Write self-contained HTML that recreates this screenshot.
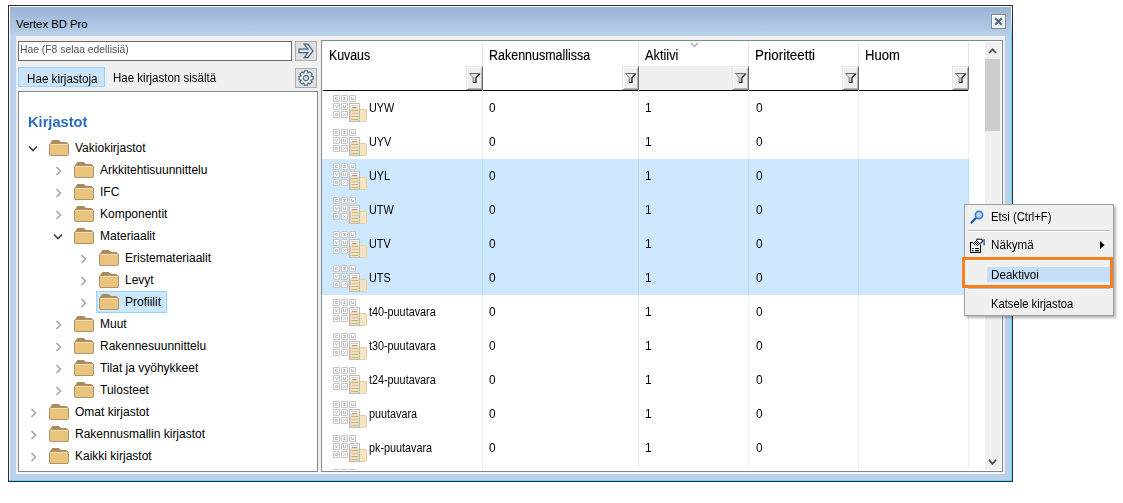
<!DOCTYPE html>
<html><head><meta charset="utf-8"><title>Vertex BD Pro</title><style>html,body{margin:0;padding:0;}
body{width:1123px;height:503px;position:relative;overflow:hidden;background:#fff;font-family:"Liberation Sans", sans-serif;}
.t{position:absolute;white-space:nowrap;transform-origin:0 0;line-height:0;height:0;}
.t span{display:inline-block;vertical-align:baseline;line-height:normal;}
svg{display:block;}
</style></head>
<body>
<div style="position:absolute;left:8px;top:5px;width:1003px;height:475px;border:1px solid #2b2b2b;background:linear-gradient(#98b2d2 0px,#b9d1ea 30px,#b9d1ea 100%);"></div>
<div style="position:absolute;left:9px;top:6px;width:1002px;height:1px;background:#fff;"></div>
<div style="position:absolute;left:9px;top:6px;width:1px;height:474px;background:#f4f8fc;"></div>
<div style="position:absolute;left:1011px;top:6px;width:1px;height:475px;background:linear-gradient(#ffffff 5px,#5fd6fb 30px,#5fd6fb);"></div>
<div style="position:absolute;left:9px;top:480px;width:1003px;height:1px;background:#5fd6fb;"></div>
<div class="t" style="left:16px;top:18.29px;font-size:11.3px;color:#000;font-weight:normal;transform:scaleX(1.0);"><span>Vertex BD Pro</span></div>
<div style="position:absolute;left:991px;top:14px;width:13px;height:13px;border:1px solid #7d8793;background:#e9f0f8;box-shadow:inset 0 0 0 1px #fff;"></div>
<svg style="position:absolute;left:994px;top:17px" width="9" height="9" viewBox="0 0 9 9"><path d="M1.2 1.2 L7.8 7.8 M7.8 1.2 L1.2 7.8" stroke="#5b6774" stroke-width="2.1"/></svg>
<div style="position:absolute;left:16px;top:36px;width:989px;height:438px;background:#f0f0f0;"></div>
<div style="position:absolute;left:16px;top:472px;width:989px;height:2px;background:#f6f6f6;"></div>
<div style="position:absolute;left:18px;top:41px;width:272px;height:18px;border:1px solid #6a6a6a;background:#fff;"></div>
<div class="t" style="left:20px;top:43.47px;font-size:11px;color:#50505a;font-weight:normal;transform:scaleX(0.94);"><span>Hae (F8 selaa edellisiä)</span></div>
<div style="position:absolute;left:295px;top:41px;width:20px;height:18px;border:1px solid #adadad;background:#e1e1e1;"></div>
<svg style="position:absolute;left:296px;top:42px" width="20" height="18" viewBox="0 0 20 18"><path d="M3,7 H11.9 L8.2,2.1 H11.8 L17,8.9 L11.8,15.7 H8.2 L11.9,10.7 H3 Z" fill="#dcebf7" stroke="#4a6074" stroke-width="1.25" stroke-linejoin="miter"/></svg>
<div style="position:absolute;left:18px;top:67px;width:85px;height:18px;border:1px solid #99d1ff;background:#cce4f7;"></div>
<div class="t" style="left:27px;top:71.65px;font-size:12px;color:#000;font-weight:normal;transform:scaleX(0.97);"><span>Hae kirjastoja</span></div>
<div class="t" style="left:113px;top:70.95px;font-size:12px;color:#000;font-weight:normal;transform:scaleX(0.96);"><span>Hae kirjaston sisältä</span></div>
<div style="position:absolute;left:295px;top:68px;width:20px;height:18px;border:1px solid #adadad;background:#e1e1e1;"></div>
<svg style="position:absolute;left:297px;top:70px" width="18" height="16" viewBox="0 0 18 16"><g transform="translate(9,8)"><polygon points="7.03,-1.57 7.03,1.57 4.90,2.01 4.89,2.04 6.08,3.86 3.86,6.08 2.04,4.89 2.01,4.90 1.57,7.03 -1.57,7.03 -2.01,4.90 -2.04,4.89 -3.86,6.08 -6.08,3.86 -4.89,2.04 -4.90,2.01 -7.03,1.57 -7.03,-1.57 -4.90,-2.01 -4.89,-2.04 -6.08,-3.86 -3.86,-6.08 -2.04,-4.89 -2.01,-4.90 -1.57,-7.03 1.57,-7.03 2.01,-4.90 2.04,-4.89 3.86,-6.08 6.08,-3.86 4.89,-2.04 4.90,-2.01" fill="#f2f6fa" stroke="#4f6a80" stroke-width="1.2"/><circle r="2.6" fill="#e1e1e1" stroke="#4f6a80" stroke-width="1.3"/></g></svg>
<div style="position:absolute;left:18px;top:91px;width:298px;height:379px;border:1px solid #828790;background:#fff;"></div>
<div class="t" style="left:27.8px;top:114.37px;font-size:14.8px;color:#2c6ebd;font-weight:bold;transform:scaleX(0.99);-webkit-text-stroke:0;"><span>Kirjastot</span></div>
<div style="position:absolute;left:28px;top:145px"><svg width="10" height="8" viewBox="0 0 10 8"><path d="M1 1.5 L5 5.5 L9 1.5" fill="none" stroke="#404040" stroke-width="1.6"/></svg></div>
<div style="position:absolute;left:49px;top:139px"><svg width="20" height="17" viewBox="0 0 20 17"><path d="M1.5 4.5 L3.5 1.5 H10 L12 3.5 H17.5 L18.5 4.5 Z" fill="#a98a5f" stroke="#a98a5f" stroke-width="1"/><rect x="0.5" y="4.5" width="19" height="12" rx="1.5" fill="#e8c47e" stroke="#b39066" stroke-width="1"/><line x1="1.5" y1="5.5" x2="18.5" y2="5.5" stroke="#f5dca8" stroke-width="1"/></svg></div>
<div class="t" style="left:75px;top:141.15px;font-size:12px;color:#000;font-weight:normal;transform:scaleX(1.0);"><span>Vakiokirjastot</span></div>
<div style="position:absolute;left:55px;top:166px"><svg width="8" height="10" viewBox="0 0 8 10"><path d="M1.5 1 L5.5 5 L1.5 9" fill="none" stroke="#a6a6a6" stroke-width="1.6"/></svg></div>
<div style="position:absolute;left:74px;top:161px"><svg width="20" height="17" viewBox="0 0 20 17"><path d="M1.5 4.5 L3.5 1.5 H10 L12 3.5 H17.5 L18.5 4.5 Z" fill="#a98a5f" stroke="#a98a5f" stroke-width="1"/><rect x="0.5" y="4.5" width="19" height="12" rx="1.5" fill="#e8c47e" stroke="#b39066" stroke-width="1"/><line x1="1.5" y1="5.5" x2="18.5" y2="5.5" stroke="#f5dca8" stroke-width="1"/></svg></div>
<div class="t" style="left:100px;top:163.15px;font-size:12px;color:#000;font-weight:normal;transform:scaleX(1.0);"><span>Arkkitehtisuunnittelu</span></div>
<div style="position:absolute;left:55px;top:188px"><svg width="8" height="10" viewBox="0 0 8 10"><path d="M1.5 1 L5.5 5 L1.5 9" fill="none" stroke="#a6a6a6" stroke-width="1.6"/></svg></div>
<div style="position:absolute;left:74px;top:183px"><svg width="20" height="17" viewBox="0 0 20 17"><path d="M1.5 4.5 L3.5 1.5 H10 L12 3.5 H17.5 L18.5 4.5 Z" fill="#a98a5f" stroke="#a98a5f" stroke-width="1"/><rect x="0.5" y="4.5" width="19" height="12" rx="1.5" fill="#e8c47e" stroke="#b39066" stroke-width="1"/><line x1="1.5" y1="5.5" x2="18.5" y2="5.5" stroke="#f5dca8" stroke-width="1"/></svg></div>
<div class="t" style="left:100px;top:185.15px;font-size:12px;color:#000;font-weight:normal;transform:scaleX(1.0);"><span>IFC</span></div>
<div style="position:absolute;left:55px;top:210px"><svg width="8" height="10" viewBox="0 0 8 10"><path d="M1.5 1 L5.5 5 L1.5 9" fill="none" stroke="#a6a6a6" stroke-width="1.6"/></svg></div>
<div style="position:absolute;left:74px;top:205px"><svg width="20" height="17" viewBox="0 0 20 17"><path d="M1.5 4.5 L3.5 1.5 H10 L12 3.5 H17.5 L18.5 4.5 Z" fill="#a98a5f" stroke="#a98a5f" stroke-width="1"/><rect x="0.5" y="4.5" width="19" height="12" rx="1.5" fill="#e8c47e" stroke="#b39066" stroke-width="1"/><line x1="1.5" y1="5.5" x2="18.5" y2="5.5" stroke="#f5dca8" stroke-width="1"/></svg></div>
<div class="t" style="left:100px;top:207.15px;font-size:12px;color:#000;font-weight:normal;transform:scaleX(1.0);"><span>Komponentit</span></div>
<div style="position:absolute;left:53px;top:233px"><svg width="10" height="8" viewBox="0 0 10 8"><path d="M1 1.5 L5 5.5 L9 1.5" fill="none" stroke="#404040" stroke-width="1.6"/></svg></div>
<div style="position:absolute;left:74px;top:227px"><svg width="20" height="17" viewBox="0 0 20 17"><path d="M1.5 4.5 L3.5 1.5 H10 L12 3.5 H17.5 L18.5 4.5 Z" fill="#a98a5f" stroke="#a98a5f" stroke-width="1"/><rect x="0.5" y="4.5" width="19" height="12" rx="1.5" fill="#e8c47e" stroke="#b39066" stroke-width="1"/><line x1="1.5" y1="5.5" x2="18.5" y2="5.5" stroke="#f5dca8" stroke-width="1"/></svg></div>
<div class="t" style="left:100px;top:229.15px;font-size:12px;color:#000;font-weight:normal;transform:scaleX(1.0);"><span>Materiaalit</span></div>
<div style="position:absolute;left:80px;top:254px"><svg width="8" height="10" viewBox="0 0 8 10"><path d="M1.5 1 L5.5 5 L1.5 9" fill="none" stroke="#a6a6a6" stroke-width="1.6"/></svg></div>
<div style="position:absolute;left:99px;top:249px"><svg width="20" height="17" viewBox="0 0 20 17"><path d="M1.5 4.5 L3.5 1.5 H10 L12 3.5 H17.5 L18.5 4.5 Z" fill="#a98a5f" stroke="#a98a5f" stroke-width="1"/><rect x="0.5" y="4.5" width="19" height="12" rx="1.5" fill="#e8c47e" stroke="#b39066" stroke-width="1"/><line x1="1.5" y1="5.5" x2="18.5" y2="5.5" stroke="#f5dca8" stroke-width="1"/></svg></div>
<div class="t" style="left:125px;top:251.15px;font-size:12px;color:#000;font-weight:normal;transform:scaleX(1.0);"><span>Eristemateriaalit</span></div>
<div style="position:absolute;left:80px;top:276px"><svg width="8" height="10" viewBox="0 0 8 10"><path d="M1.5 1 L5.5 5 L1.5 9" fill="none" stroke="#a6a6a6" stroke-width="1.6"/></svg></div>
<div style="position:absolute;left:99px;top:271px"><svg width="20" height="17" viewBox="0 0 20 17"><path d="M1.5 4.5 L3.5 1.5 H10 L12 3.5 H17.5 L18.5 4.5 Z" fill="#a98a5f" stroke="#a98a5f" stroke-width="1"/><rect x="0.5" y="4.5" width="19" height="12" rx="1.5" fill="#e8c47e" stroke="#b39066" stroke-width="1"/><line x1="1.5" y1="5.5" x2="18.5" y2="5.5" stroke="#f5dca8" stroke-width="1"/></svg></div>
<div class="t" style="left:125px;top:273.15px;font-size:12px;color:#000;font-weight:normal;transform:scaleX(1.0);"><span>Levyt</span></div>
<div style="position:absolute;left:96px;top:291px;width:69px;height:20px;border:1px solid #99d1ff;background:#cce8ff;"></div>
<div style="position:absolute;left:80px;top:298px"><svg width="8" height="10" viewBox="0 0 8 10"><path d="M1.5 1 L5.5 5 L1.5 9" fill="none" stroke="#a6a6a6" stroke-width="1.6"/></svg></div>
<div style="position:absolute;left:99px;top:293px"><svg width="20" height="17" viewBox="0 0 20 17"><path d="M1.5 4.5 L3.5 1.5 H10 L12 3.5 H17.5 L18.5 4.5 Z" fill="#a98a5f" stroke="#a98a5f" stroke-width="1"/><rect x="0.5" y="4.5" width="19" height="12" rx="1.5" fill="#e8c47e" stroke="#b39066" stroke-width="1"/><line x1="1.5" y1="5.5" x2="18.5" y2="5.5" stroke="#f5dca8" stroke-width="1"/></svg></div>
<div class="t" style="left:125px;top:295.15px;font-size:12px;color:#000;font-weight:normal;transform:scaleX(1.0);"><span>Profiilit</span></div>
<div style="position:absolute;left:55px;top:320px"><svg width="8" height="10" viewBox="0 0 8 10"><path d="M1.5 1 L5.5 5 L1.5 9" fill="none" stroke="#a6a6a6" stroke-width="1.6"/></svg></div>
<div style="position:absolute;left:74px;top:315px"><svg width="20" height="17" viewBox="0 0 20 17"><path d="M1.5 4.5 L3.5 1.5 H10 L12 3.5 H17.5 L18.5 4.5 Z" fill="#a98a5f" stroke="#a98a5f" stroke-width="1"/><rect x="0.5" y="4.5" width="19" height="12" rx="1.5" fill="#e8c47e" stroke="#b39066" stroke-width="1"/><line x1="1.5" y1="5.5" x2="18.5" y2="5.5" stroke="#f5dca8" stroke-width="1"/></svg></div>
<div class="t" style="left:100px;top:317.15px;font-size:12px;color:#000;font-weight:normal;transform:scaleX(1.0);"><span>Muut</span></div>
<div style="position:absolute;left:55px;top:342px"><svg width="8" height="10" viewBox="0 0 8 10"><path d="M1.5 1 L5.5 5 L1.5 9" fill="none" stroke="#a6a6a6" stroke-width="1.6"/></svg></div>
<div style="position:absolute;left:74px;top:337px"><svg width="20" height="17" viewBox="0 0 20 17"><path d="M1.5 4.5 L3.5 1.5 H10 L12 3.5 H17.5 L18.5 4.5 Z" fill="#a98a5f" stroke="#a98a5f" stroke-width="1"/><rect x="0.5" y="4.5" width="19" height="12" rx="1.5" fill="#e8c47e" stroke="#b39066" stroke-width="1"/><line x1="1.5" y1="5.5" x2="18.5" y2="5.5" stroke="#f5dca8" stroke-width="1"/></svg></div>
<div class="t" style="left:100px;top:339.15px;font-size:12px;color:#000;font-weight:normal;transform:scaleX(1.0);"><span>Rakennesuunnittelu</span></div>
<div style="position:absolute;left:55px;top:364px"><svg width="8" height="10" viewBox="0 0 8 10"><path d="M1.5 1 L5.5 5 L1.5 9" fill="none" stroke="#a6a6a6" stroke-width="1.6"/></svg></div>
<div style="position:absolute;left:74px;top:359px"><svg width="20" height="17" viewBox="0 0 20 17"><path d="M1.5 4.5 L3.5 1.5 H10 L12 3.5 H17.5 L18.5 4.5 Z" fill="#a98a5f" stroke="#a98a5f" stroke-width="1"/><rect x="0.5" y="4.5" width="19" height="12" rx="1.5" fill="#e8c47e" stroke="#b39066" stroke-width="1"/><line x1="1.5" y1="5.5" x2="18.5" y2="5.5" stroke="#f5dca8" stroke-width="1"/></svg></div>
<div class="t" style="left:100px;top:361.15px;font-size:12px;color:#000;font-weight:normal;transform:scaleX(1.0);"><span>Tilat ja vyöhykkeet</span></div>
<div style="position:absolute;left:55px;top:386px"><svg width="8" height="10" viewBox="0 0 8 10"><path d="M1.5 1 L5.5 5 L1.5 9" fill="none" stroke="#a6a6a6" stroke-width="1.6"/></svg></div>
<div style="position:absolute;left:74px;top:381px"><svg width="20" height="17" viewBox="0 0 20 17"><path d="M1.5 4.5 L3.5 1.5 H10 L12 3.5 H17.5 L18.5 4.5 Z" fill="#a98a5f" stroke="#a98a5f" stroke-width="1"/><rect x="0.5" y="4.5" width="19" height="12" rx="1.5" fill="#e8c47e" stroke="#b39066" stroke-width="1"/><line x1="1.5" y1="5.5" x2="18.5" y2="5.5" stroke="#f5dca8" stroke-width="1"/></svg></div>
<div class="t" style="left:100px;top:383.15px;font-size:12px;color:#000;font-weight:normal;transform:scaleX(1.0);"><span>Tulosteet</span></div>
<div style="position:absolute;left:30px;top:408px"><svg width="8" height="10" viewBox="0 0 8 10"><path d="M1.5 1 L5.5 5 L1.5 9" fill="none" stroke="#a6a6a6" stroke-width="1.6"/></svg></div>
<div style="position:absolute;left:49px;top:403px"><svg width="20" height="17" viewBox="0 0 20 17"><path d="M1.5 4.5 L3.5 1.5 H10 L12 3.5 H17.5 L18.5 4.5 Z" fill="#a98a5f" stroke="#a98a5f" stroke-width="1"/><rect x="0.5" y="4.5" width="19" height="12" rx="1.5" fill="#e8c47e" stroke="#b39066" stroke-width="1"/><line x1="1.5" y1="5.5" x2="18.5" y2="5.5" stroke="#f5dca8" stroke-width="1"/></svg></div>
<div class="t" style="left:75px;top:405.15px;font-size:12px;color:#000;font-weight:normal;transform:scaleX(1.0);"><span>Omat kirjastot</span></div>
<div style="position:absolute;left:30px;top:430px"><svg width="8" height="10" viewBox="0 0 8 10"><path d="M1.5 1 L5.5 5 L1.5 9" fill="none" stroke="#a6a6a6" stroke-width="1.6"/></svg></div>
<div style="position:absolute;left:49px;top:425px"><svg width="20" height="17" viewBox="0 0 20 17"><path d="M1.5 4.5 L3.5 1.5 H10 L12 3.5 H17.5 L18.5 4.5 Z" fill="#a98a5f" stroke="#a98a5f" stroke-width="1"/><rect x="0.5" y="4.5" width="19" height="12" rx="1.5" fill="#e8c47e" stroke="#b39066" stroke-width="1"/><line x1="1.5" y1="5.5" x2="18.5" y2="5.5" stroke="#f5dca8" stroke-width="1"/></svg></div>
<div class="t" style="left:75px;top:427.15px;font-size:12px;color:#000;font-weight:normal;transform:scaleX(1.0);"><span>Rakennusmallin kirjastot</span></div>
<div style="position:absolute;left:30px;top:452px"><svg width="8" height="10" viewBox="0 0 8 10"><path d="M1.5 1 L5.5 5 L1.5 9" fill="none" stroke="#a6a6a6" stroke-width="1.6"/></svg></div>
<div style="position:absolute;left:49px;top:447px"><svg width="20" height="17" viewBox="0 0 20 17"><path d="M1.5 4.5 L3.5 1.5 H10 L12 3.5 H17.5 L18.5 4.5 Z" fill="#a98a5f" stroke="#a98a5f" stroke-width="1"/><rect x="0.5" y="4.5" width="19" height="12" rx="1.5" fill="#e8c47e" stroke="#b39066" stroke-width="1"/><line x1="1.5" y1="5.5" x2="18.5" y2="5.5" stroke="#f5dca8" stroke-width="1"/></svg></div>
<div class="t" style="left:75px;top:449.15px;font-size:12px;color:#000;font-weight:normal;transform:scaleX(1.0);"><span>Kaikki kirjastot</span></div>
<div style="position:absolute;left:321px;top:40px;width:680px;height:430px;border:1px solid #828790;background:#fff;"></div>
<div style="position:absolute;left:482px;top:42px;width:1px;height:24px;background:#e5e5e5;"></div>
<div style="position:absolute;left:638px;top:42px;width:1px;height:24px;background:#e5e5e5;"></div>
<div style="position:absolute;left:748px;top:42px;width:1px;height:24px;background:#e5e5e5;"></div>
<div style="position:absolute;left:858px;top:42px;width:1px;height:24px;background:#e5e5e5;"></div>
<div style="position:absolute;left:968px;top:42px;width:1px;height:24px;background:#e5e5e5;"></div>
<div style="position:absolute;left:322px;top:159px;width:647px;height:136px;background:#cde8ff;"></div>
<div style="position:absolute;left:482px;top:91px;width:1px;height:379px;background:#e8f1fb;"></div>
<div style="position:absolute;left:482px;top:159px;width:1px;height:136px;background:#b9dcfa;"></div>
<div style="position:absolute;left:323px;top:90px;width:159px;height:1px;background:#0a0a0a;"></div>
<div style="position:absolute;left:466px;top:66px;width:15px;height:23px;background:#efefef;border-left:1px solid #e3e3e3;border-top:1px solid #e3e3e3;box-shadow:inset 1px 1px 0 #fff;border-right:1px solid #6e6e6e;border-bottom:1px solid #8f8f8f;box-sizing:border-box;width:17px;height:24px;box-shadow:inset 1px 1px 0 #fff, inset -1px -1px 0 #b4b4b4;"></div>
<div style="position:absolute;left:469px;top:73px"><svg width="12" height="11" viewBox="0 0 12 11"><path d="M0.5 0.5 H11 L7 4.8 V9.5 H4 V4.8 Z" fill="#c2c2c2"/><path d="M1.8 1.2 H9.5 L6.5 4.2 H4.5 Z" fill="#e6e6e6"/><path d="M0.5 0.5 L4 4.5 V9.5" fill="none" stroke="#8c8c8c" stroke-width="1"/><path d="M0.5 0.5 H10" fill="none" stroke="#6a6a6a" stroke-width="1"/><path d="M11 0.5 L7 4.8 V9.5 H4" fill="none" stroke="#0d0d0d" stroke-width="1.1" stroke-linejoin="miter"/></svg></div>
<div class="t" style="left:328.5px;top:46.02px;font-size:15.5px;color:#000;font-weight:normal;transform:scaleX(0.795);-webkit-text-stroke:0.15px #000;"><span>Kuvaus</span></div>
<div style="position:absolute;left:638px;top:91px;width:1px;height:379px;background:#e8f1fb;"></div>
<div style="position:absolute;left:638px;top:159px;width:1px;height:136px;background:#b9dcfa;"></div>
<div style="position:absolute;left:483px;top:90px;width:155px;height:1px;background:#0a0a0a;"></div>
<div style="position:absolute;left:622px;top:66px;width:15px;height:23px;background:#efefef;border-left:1px solid #e3e3e3;border-top:1px solid #e3e3e3;box-shadow:inset 1px 1px 0 #fff;border-right:1px solid #6e6e6e;border-bottom:1px solid #8f8f8f;box-sizing:border-box;width:17px;height:24px;box-shadow:inset 1px 1px 0 #fff, inset -1px -1px 0 #b4b4b4;"></div>
<div style="position:absolute;left:625px;top:73px"><svg width="12" height="11" viewBox="0 0 12 11"><path d="M0.5 0.5 H11 L7 4.8 V9.5 H4 V4.8 Z" fill="#c2c2c2"/><path d="M1.8 1.2 H9.5 L6.5 4.2 H4.5 Z" fill="#e6e6e6"/><path d="M0.5 0.5 L4 4.5 V9.5" fill="none" stroke="#8c8c8c" stroke-width="1"/><path d="M0.5 0.5 H10" fill="none" stroke="#6a6a6a" stroke-width="1"/><path d="M11 0.5 L7 4.8 V9.5 H4" fill="none" stroke="#0d0d0d" stroke-width="1.1" stroke-linejoin="miter"/></svg></div>
<div class="t" style="left:489px;top:46.02px;font-size:15.5px;color:#000;font-weight:normal;transform:scaleX(0.805);-webkit-text-stroke:0.15px #000;"><span>Rakennusmallissa</span></div>
<div style="position:absolute;left:748px;top:91px;width:1px;height:379px;background:#e8f1fb;"></div>
<div style="position:absolute;left:748px;top:159px;width:1px;height:136px;background:#b9dcfa;"></div>
<div style="position:absolute;left:639px;top:66px;width:93px;height:24px;background:#f0f0f0;"></div>
<div style="position:absolute;left:639px;top:90px;width:109px;height:1px;background:#0a0a0a;"></div>
<div style="position:absolute;left:732px;top:66px;width:15px;height:23px;background:#efefef;border-left:1px solid #e3e3e3;border-top:1px solid #e3e3e3;box-shadow:inset 1px 1px 0 #fff;border-right:1px solid #6e6e6e;border-bottom:1px solid #8f8f8f;box-sizing:border-box;width:17px;height:24px;box-shadow:inset 1px 1px 0 #fff, inset -1px -1px 0 #b4b4b4;"></div>
<div style="position:absolute;left:735px;top:73px"><svg width="12" height="11" viewBox="0 0 12 11"><path d="M0.5 0.5 H11 L7 4.8 V9.5 H4 V4.8 Z" fill="#c2c2c2"/><path d="M1.8 1.2 H9.5 L6.5 4.2 H4.5 Z" fill="#e6e6e6"/><path d="M0.5 0.5 L4 4.5 V9.5" fill="none" stroke="#8c8c8c" stroke-width="1"/><path d="M0.5 0.5 H10" fill="none" stroke="#6a6a6a" stroke-width="1"/><path d="M11 0.5 L7 4.8 V9.5 H4" fill="none" stroke="#0d0d0d" stroke-width="1.1" stroke-linejoin="miter"/></svg></div>
<div class="t" style="left:645px;top:46.02px;font-size:15.5px;color:#000;font-weight:normal;transform:scaleX(0.825);-webkit-text-stroke:0.15px #000;"><span>Aktiivi</span></div>
<div style="position:absolute;left:858px;top:91px;width:1px;height:379px;background:#e8f1fb;"></div>
<div style="position:absolute;left:858px;top:159px;width:1px;height:136px;background:#b9dcfa;"></div>
<div style="position:absolute;left:749px;top:90px;width:109px;height:1px;background:#0a0a0a;"></div>
<div style="position:absolute;left:842px;top:66px;width:15px;height:23px;background:#efefef;border-left:1px solid #e3e3e3;border-top:1px solid #e3e3e3;box-shadow:inset 1px 1px 0 #fff;border-right:1px solid #6e6e6e;border-bottom:1px solid #8f8f8f;box-sizing:border-box;width:17px;height:24px;box-shadow:inset 1px 1px 0 #fff, inset -1px -1px 0 #b4b4b4;"></div>
<div style="position:absolute;left:845px;top:73px"><svg width="12" height="11" viewBox="0 0 12 11"><path d="M0.5 0.5 H11 L7 4.8 V9.5 H4 V4.8 Z" fill="#c2c2c2"/><path d="M1.8 1.2 H9.5 L6.5 4.2 H4.5 Z" fill="#e6e6e6"/><path d="M0.5 0.5 L4 4.5 V9.5" fill="none" stroke="#8c8c8c" stroke-width="1"/><path d="M0.5 0.5 H10" fill="none" stroke="#6a6a6a" stroke-width="1"/><path d="M11 0.5 L7 4.8 V9.5 H4" fill="none" stroke="#0d0d0d" stroke-width="1.1" stroke-linejoin="miter"/></svg></div>
<div class="t" style="left:755px;top:46.02px;font-size:15.5px;color:#000;font-weight:normal;transform:scaleX(0.861);-webkit-text-stroke:0.15px #000;"><span>Prioriteetti</span></div>
<div style="position:absolute;left:968px;top:91px;width:1px;height:379px;background:#e8f1fb;"></div>
<div style="position:absolute;left:968px;top:159px;width:1px;height:136px;background:#b9dcfa;"></div>
<div style="position:absolute;left:859px;top:90px;width:109px;height:1px;background:#0a0a0a;"></div>
<div style="position:absolute;left:952px;top:66px;width:15px;height:23px;background:#efefef;border-left:1px solid #e3e3e3;border-top:1px solid #e3e3e3;box-shadow:inset 1px 1px 0 #fff;border-right:1px solid #6e6e6e;border-bottom:1px solid #8f8f8f;box-sizing:border-box;width:17px;height:24px;box-shadow:inset 1px 1px 0 #fff, inset -1px -1px 0 #b4b4b4;"></div>
<div style="position:absolute;left:955px;top:73px"><svg width="12" height="11" viewBox="0 0 12 11"><path d="M0.5 0.5 H11 L7 4.8 V9.5 H4 V4.8 Z" fill="#c2c2c2"/><path d="M1.8 1.2 H9.5 L6.5 4.2 H4.5 Z" fill="#e6e6e6"/><path d="M0.5 0.5 L4 4.5 V9.5" fill="none" stroke="#8c8c8c" stroke-width="1"/><path d="M0.5 0.5 H10" fill="none" stroke="#6a6a6a" stroke-width="1"/><path d="M11 0.5 L7 4.8 V9.5 H4" fill="none" stroke="#0d0d0d" stroke-width="1.1" stroke-linejoin="miter"/></svg></div>
<div class="t" style="left:865px;top:46.02px;font-size:15.5px;color:#000;font-weight:normal;transform:scaleX(0.841);-webkit-text-stroke:0.15px #000;"><span>Huom</span></div>
<svg style="position:absolute;left:690px;top:42px" width="9" height="6" viewBox="0 0 9 6"><path d="M0.8 0.8 L4.5 4.5 L8.2 0.8" fill="none" stroke="#9a9a9a" stroke-width="1.1"/></svg>
<div style="position:absolute;left:333px;top:95px;height:28px;overflow:hidden"><svg width="36" height="28" viewBox="0 0 36 28"><rect x="0.5" y="0.5" width="6" height="6" rx="0.8" fill="#fff" stroke="#c6c6c6" stroke-width="1.1"/><path transform="translate(0,0)" d="M5 2.5 H2.5 V4.5 H5" fill="none" stroke="#b4b4b4" stroke-width="0.9"/><rect x="8.5" y="0.5" width="6" height="6" rx="0.8" fill="#fff" stroke="#c6c6c6" stroke-width="1.1"/><path transform="translate(8,0)" d="M2 2.5 H5 M3.5 2.5 V4.5 M2 4.5 H5" fill="none" stroke="#b4b4b4" stroke-width="0.9"/><rect x="16.5" y="0.5" width="6" height="6" rx="0.8" fill="#fff" stroke="#c6c6c6" stroke-width="1.1"/><path transform="translate(16,0)" d="M2.5 2 V4.5 H5 M3 3.5 L4 4.5 L5 2.5" fill="none" stroke="#b4b4b4" stroke-width="0.9"/><rect x="0.5" y="8.5" width="6" height="6" rx="0.8" fill="#fff" stroke="#c6c6c6" stroke-width="1.1"/><path transform="translate(0,8)" d="M2.2 2 L3.5 5 L4.8 2" fill="none" stroke="#b4b4b4" stroke-width="0.9"/><rect x="8.5" y="8.5" width="6" height="6" rx="0.8" fill="#fff" stroke="#c6c6c6" stroke-width="1.1"/><path transform="translate(8,8)" d="M2.5 2 V4.8 H4.5 V2" fill="none" stroke="#b4b4b4" stroke-width="0.9"/><rect x="0.5" y="16.5" width="6" height="6" rx="0.8" fill="#fff" stroke="#c6c6c6" stroke-width="1.1"/><path transform="translate(0,16)" d="M2.5 2.5 H4.5 V4.5 H2.5 Z" fill="none" stroke="#b4b4b4" stroke-width="0.9"/><rect x="8.5" y="16.5" width="6" height="6" rx="0.8" fill="#fff" stroke="#c6c6c6" stroke-width="1.1"/><path transform="translate(8,16)" d="M2.2 2.2 L4.8 4.8 M4.8 2.2 L2.2 4.8" fill="none" stroke="#b4b4b4" stroke-width="0.9"/><rect x="22" y="14.5" width="11.5" height="12" rx="1" fill="#f7e3c0" stroke="#e6cfa5" stroke-width="1"/><rect x="16.5" y="8.5" width="10" height="18" fill="#fff" stroke="#bdbdbd" stroke-width="1"/><rect x="17.5" y="12" width="8" height="14" fill="#efe3bf"/><line x1="18" y1="10.5" x2="25" y2="10.5" stroke="#c9c9c9"/><line x1="19" y1="12.5" x2="24" y2="12.5" stroke="#c09080" stroke-width="1.2"/><line x1="18.5" y1="15.5" x2="25" y2="15.5" stroke="#c8b46a"/><line x1="18.5" y1="18.5" x2="25" y2="18.5" stroke="#e6c0b0" stroke-width="1.5"/><line x1="18.5" y1="21.5" x2="25" y2="21.5" stroke="#c8b46a"/><line x1="18.5" y1="24.5" x2="25" y2="24.5" stroke="#c8b46a"/><line x1="17" y1="14" x2="17" y2="26" stroke="#d4a0a0"/><line x1="26" y1="14" x2="26" y2="26" stroke="#a8ccb8"/></svg></div>
<div class="t" style="left:368.5px;top:100.95px;font-size:12px;color:#000;font-weight:normal;transform:scaleX(0.9);"><span>UYW</span></div>
<div class="t" style="left:488.6px;top:101.09px;font-size:12.5px;color:#000;font-weight:normal;transform:scaleX(0.95);"><span>0</span></div>
<div class="t" style="left:645px;top:101.09px;font-size:12.5px;color:#000;font-weight:normal;transform:scaleX(0.95);"><span>1</span></div>
<div class="t" style="left:755.6px;top:101.09px;font-size:12.5px;color:#000;font-weight:normal;transform:scaleX(0.95);"><span>0</span></div>
<div style="position:absolute;left:333px;top:129px;height:28px;overflow:hidden"><svg width="36" height="28" viewBox="0 0 36 28"><rect x="0.5" y="0.5" width="6" height="6" rx="0.8" fill="#fff" stroke="#c6c6c6" stroke-width="1.1"/><path transform="translate(0,0)" d="M5 2.5 H2.5 V4.5 H5" fill="none" stroke="#b4b4b4" stroke-width="0.9"/><rect x="8.5" y="0.5" width="6" height="6" rx="0.8" fill="#fff" stroke="#c6c6c6" stroke-width="1.1"/><path transform="translate(8,0)" d="M2 2.5 H5 M3.5 2.5 V4.5 M2 4.5 H5" fill="none" stroke="#b4b4b4" stroke-width="0.9"/><rect x="16.5" y="0.5" width="6" height="6" rx="0.8" fill="#fff" stroke="#c6c6c6" stroke-width="1.1"/><path transform="translate(16,0)" d="M2.5 2 V4.5 H5 M3 3.5 L4 4.5 L5 2.5" fill="none" stroke="#b4b4b4" stroke-width="0.9"/><rect x="0.5" y="8.5" width="6" height="6" rx="0.8" fill="#fff" stroke="#c6c6c6" stroke-width="1.1"/><path transform="translate(0,8)" d="M2.2 2 L3.5 5 L4.8 2" fill="none" stroke="#b4b4b4" stroke-width="0.9"/><rect x="8.5" y="8.5" width="6" height="6" rx="0.8" fill="#fff" stroke="#c6c6c6" stroke-width="1.1"/><path transform="translate(8,8)" d="M2.5 2 V4.8 H4.5 V2" fill="none" stroke="#b4b4b4" stroke-width="0.9"/><rect x="0.5" y="16.5" width="6" height="6" rx="0.8" fill="#fff" stroke="#c6c6c6" stroke-width="1.1"/><path transform="translate(0,16)" d="M2.5 2.5 H4.5 V4.5 H2.5 Z" fill="none" stroke="#b4b4b4" stroke-width="0.9"/><rect x="8.5" y="16.5" width="6" height="6" rx="0.8" fill="#fff" stroke="#c6c6c6" stroke-width="1.1"/><path transform="translate(8,16)" d="M2.2 2.2 L4.8 4.8 M4.8 2.2 L2.2 4.8" fill="none" stroke="#b4b4b4" stroke-width="0.9"/><rect x="22" y="14.5" width="11.5" height="12" rx="1" fill="#f7e3c0" stroke="#e6cfa5" stroke-width="1"/><rect x="16.5" y="8.5" width="10" height="18" fill="#fff" stroke="#bdbdbd" stroke-width="1"/><rect x="17.5" y="12" width="8" height="14" fill="#efe3bf"/><line x1="18" y1="10.5" x2="25" y2="10.5" stroke="#c9c9c9"/><line x1="19" y1="12.5" x2="24" y2="12.5" stroke="#c09080" stroke-width="1.2"/><line x1="18.5" y1="15.5" x2="25" y2="15.5" stroke="#c8b46a"/><line x1="18.5" y1="18.5" x2="25" y2="18.5" stroke="#e6c0b0" stroke-width="1.5"/><line x1="18.5" y1="21.5" x2="25" y2="21.5" stroke="#c8b46a"/><line x1="18.5" y1="24.5" x2="25" y2="24.5" stroke="#c8b46a"/><line x1="17" y1="14" x2="17" y2="26" stroke="#d4a0a0"/><line x1="26" y1="14" x2="26" y2="26" stroke="#a8ccb8"/></svg></div>
<div class="t" style="left:368.5px;top:134.95px;font-size:12px;color:#000;font-weight:normal;transform:scaleX(0.9);"><span>UYV</span></div>
<div class="t" style="left:488.6px;top:135.09px;font-size:12.5px;color:#000;font-weight:normal;transform:scaleX(0.95);"><span>0</span></div>
<div class="t" style="left:645px;top:135.09px;font-size:12.5px;color:#000;font-weight:normal;transform:scaleX(0.95);"><span>1</span></div>
<div class="t" style="left:755.6px;top:135.09px;font-size:12.5px;color:#000;font-weight:normal;transform:scaleX(0.95);"><span>0</span></div>
<div style="position:absolute;left:333px;top:163px;height:28px;overflow:hidden"><svg width="36" height="28" viewBox="0 0 36 28"><rect x="0.5" y="0.5" width="6" height="6" rx="0.8" fill="#fff" stroke="#c6c6c6" stroke-width="1.1"/><path transform="translate(0,0)" d="M5 2.5 H2.5 V4.5 H5" fill="none" stroke="#b4b4b4" stroke-width="0.9"/><rect x="8.5" y="0.5" width="6" height="6" rx="0.8" fill="#fff" stroke="#c6c6c6" stroke-width="1.1"/><path transform="translate(8,0)" d="M2 2.5 H5 M3.5 2.5 V4.5 M2 4.5 H5" fill="none" stroke="#b4b4b4" stroke-width="0.9"/><rect x="16.5" y="0.5" width="6" height="6" rx="0.8" fill="#fff" stroke="#c6c6c6" stroke-width="1.1"/><path transform="translate(16,0)" d="M2.5 2 V4.5 H5 M3 3.5 L4 4.5 L5 2.5" fill="none" stroke="#b4b4b4" stroke-width="0.9"/><rect x="0.5" y="8.5" width="6" height="6" rx="0.8" fill="#fff" stroke="#c6c6c6" stroke-width="1.1"/><path transform="translate(0,8)" d="M2.2 2 L3.5 5 L4.8 2" fill="none" stroke="#b4b4b4" stroke-width="0.9"/><rect x="8.5" y="8.5" width="6" height="6" rx="0.8" fill="#fff" stroke="#c6c6c6" stroke-width="1.1"/><path transform="translate(8,8)" d="M2.5 2 V4.8 H4.5 V2" fill="none" stroke="#b4b4b4" stroke-width="0.9"/><rect x="0.5" y="16.5" width="6" height="6" rx="0.8" fill="#fff" stroke="#c6c6c6" stroke-width="1.1"/><path transform="translate(0,16)" d="M2.5 2.5 H4.5 V4.5 H2.5 Z" fill="none" stroke="#b4b4b4" stroke-width="0.9"/><rect x="8.5" y="16.5" width="6" height="6" rx="0.8" fill="#fff" stroke="#c6c6c6" stroke-width="1.1"/><path transform="translate(8,16)" d="M2.2 2.2 L4.8 4.8 M4.8 2.2 L2.2 4.8" fill="none" stroke="#b4b4b4" stroke-width="0.9"/><rect x="22" y="14.5" width="11.5" height="12" rx="1" fill="#f7e3c0" stroke="#e6cfa5" stroke-width="1"/><rect x="16.5" y="8.5" width="10" height="18" fill="#fff" stroke="#bdbdbd" stroke-width="1"/><rect x="17.5" y="12" width="8" height="14" fill="#efe3bf"/><line x1="18" y1="10.5" x2="25" y2="10.5" stroke="#c9c9c9"/><line x1="19" y1="12.5" x2="24" y2="12.5" stroke="#c09080" stroke-width="1.2"/><line x1="18.5" y1="15.5" x2="25" y2="15.5" stroke="#c8b46a"/><line x1="18.5" y1="18.5" x2="25" y2="18.5" stroke="#e6c0b0" stroke-width="1.5"/><line x1="18.5" y1="21.5" x2="25" y2="21.5" stroke="#c8b46a"/><line x1="18.5" y1="24.5" x2="25" y2="24.5" stroke="#c8b46a"/><line x1="17" y1="14" x2="17" y2="26" stroke="#d4a0a0"/><line x1="26" y1="14" x2="26" y2="26" stroke="#a8ccb8"/></svg></div>
<div class="t" style="left:368.5px;top:168.95px;font-size:12px;color:#000;font-weight:normal;transform:scaleX(0.9);"><span>UYL</span></div>
<div class="t" style="left:488.6px;top:169.09px;font-size:12.5px;color:#000;font-weight:normal;transform:scaleX(0.95);"><span>0</span></div>
<div class="t" style="left:645px;top:169.09px;font-size:12.5px;color:#000;font-weight:normal;transform:scaleX(0.95);"><span>1</span></div>
<div class="t" style="left:755.6px;top:169.09px;font-size:12.5px;color:#000;font-weight:normal;transform:scaleX(0.95);"><span>0</span></div>
<div style="position:absolute;left:333px;top:197px;height:28px;overflow:hidden"><svg width="36" height="28" viewBox="0 0 36 28"><rect x="0.5" y="0.5" width="6" height="6" rx="0.8" fill="#fff" stroke="#c6c6c6" stroke-width="1.1"/><path transform="translate(0,0)" d="M5 2.5 H2.5 V4.5 H5" fill="none" stroke="#b4b4b4" stroke-width="0.9"/><rect x="8.5" y="0.5" width="6" height="6" rx="0.8" fill="#fff" stroke="#c6c6c6" stroke-width="1.1"/><path transform="translate(8,0)" d="M2 2.5 H5 M3.5 2.5 V4.5 M2 4.5 H5" fill="none" stroke="#b4b4b4" stroke-width="0.9"/><rect x="16.5" y="0.5" width="6" height="6" rx="0.8" fill="#fff" stroke="#c6c6c6" stroke-width="1.1"/><path transform="translate(16,0)" d="M2.5 2 V4.5 H5 M3 3.5 L4 4.5 L5 2.5" fill="none" stroke="#b4b4b4" stroke-width="0.9"/><rect x="0.5" y="8.5" width="6" height="6" rx="0.8" fill="#fff" stroke="#c6c6c6" stroke-width="1.1"/><path transform="translate(0,8)" d="M2.2 2 L3.5 5 L4.8 2" fill="none" stroke="#b4b4b4" stroke-width="0.9"/><rect x="8.5" y="8.5" width="6" height="6" rx="0.8" fill="#fff" stroke="#c6c6c6" stroke-width="1.1"/><path transform="translate(8,8)" d="M2.5 2 V4.8 H4.5 V2" fill="none" stroke="#b4b4b4" stroke-width="0.9"/><rect x="0.5" y="16.5" width="6" height="6" rx="0.8" fill="#fff" stroke="#c6c6c6" stroke-width="1.1"/><path transform="translate(0,16)" d="M2.5 2.5 H4.5 V4.5 H2.5 Z" fill="none" stroke="#b4b4b4" stroke-width="0.9"/><rect x="8.5" y="16.5" width="6" height="6" rx="0.8" fill="#fff" stroke="#c6c6c6" stroke-width="1.1"/><path transform="translate(8,16)" d="M2.2 2.2 L4.8 4.8 M4.8 2.2 L2.2 4.8" fill="none" stroke="#b4b4b4" stroke-width="0.9"/><rect x="22" y="14.5" width="11.5" height="12" rx="1" fill="#f7e3c0" stroke="#e6cfa5" stroke-width="1"/><rect x="16.5" y="8.5" width="10" height="18" fill="#fff" stroke="#bdbdbd" stroke-width="1"/><rect x="17.5" y="12" width="8" height="14" fill="#efe3bf"/><line x1="18" y1="10.5" x2="25" y2="10.5" stroke="#c9c9c9"/><line x1="19" y1="12.5" x2="24" y2="12.5" stroke="#c09080" stroke-width="1.2"/><line x1="18.5" y1="15.5" x2="25" y2="15.5" stroke="#c8b46a"/><line x1="18.5" y1="18.5" x2="25" y2="18.5" stroke="#e6c0b0" stroke-width="1.5"/><line x1="18.5" y1="21.5" x2="25" y2="21.5" stroke="#c8b46a"/><line x1="18.5" y1="24.5" x2="25" y2="24.5" stroke="#c8b46a"/><line x1="17" y1="14" x2="17" y2="26" stroke="#d4a0a0"/><line x1="26" y1="14" x2="26" y2="26" stroke="#a8ccb8"/></svg></div>
<div class="t" style="left:368.5px;top:202.95px;font-size:12px;color:#000;font-weight:normal;transform:scaleX(0.9);"><span>UTW</span></div>
<div class="t" style="left:488.6px;top:203.09px;font-size:12.5px;color:#000;font-weight:normal;transform:scaleX(0.95);"><span>0</span></div>
<div class="t" style="left:645px;top:203.09px;font-size:12.5px;color:#000;font-weight:normal;transform:scaleX(0.95);"><span>1</span></div>
<div class="t" style="left:755.6px;top:203.09px;font-size:12.5px;color:#000;font-weight:normal;transform:scaleX(0.95);"><span>0</span></div>
<div style="position:absolute;left:333px;top:231px;height:28px;overflow:hidden"><svg width="36" height="28" viewBox="0 0 36 28"><rect x="0.5" y="0.5" width="6" height="6" rx="0.8" fill="#fff" stroke="#c6c6c6" stroke-width="1.1"/><path transform="translate(0,0)" d="M5 2.5 H2.5 V4.5 H5" fill="none" stroke="#b4b4b4" stroke-width="0.9"/><rect x="8.5" y="0.5" width="6" height="6" rx="0.8" fill="#fff" stroke="#c6c6c6" stroke-width="1.1"/><path transform="translate(8,0)" d="M2 2.5 H5 M3.5 2.5 V4.5 M2 4.5 H5" fill="none" stroke="#b4b4b4" stroke-width="0.9"/><rect x="16.5" y="0.5" width="6" height="6" rx="0.8" fill="#fff" stroke="#c6c6c6" stroke-width="1.1"/><path transform="translate(16,0)" d="M2.5 2 V4.5 H5 M3 3.5 L4 4.5 L5 2.5" fill="none" stroke="#b4b4b4" stroke-width="0.9"/><rect x="0.5" y="8.5" width="6" height="6" rx="0.8" fill="#fff" stroke="#c6c6c6" stroke-width="1.1"/><path transform="translate(0,8)" d="M2.2 2 L3.5 5 L4.8 2" fill="none" stroke="#b4b4b4" stroke-width="0.9"/><rect x="8.5" y="8.5" width="6" height="6" rx="0.8" fill="#fff" stroke="#c6c6c6" stroke-width="1.1"/><path transform="translate(8,8)" d="M2.5 2 V4.8 H4.5 V2" fill="none" stroke="#b4b4b4" stroke-width="0.9"/><rect x="0.5" y="16.5" width="6" height="6" rx="0.8" fill="#fff" stroke="#c6c6c6" stroke-width="1.1"/><path transform="translate(0,16)" d="M2.5 2.5 H4.5 V4.5 H2.5 Z" fill="none" stroke="#b4b4b4" stroke-width="0.9"/><rect x="8.5" y="16.5" width="6" height="6" rx="0.8" fill="#fff" stroke="#c6c6c6" stroke-width="1.1"/><path transform="translate(8,16)" d="M2.2 2.2 L4.8 4.8 M4.8 2.2 L2.2 4.8" fill="none" stroke="#b4b4b4" stroke-width="0.9"/><rect x="22" y="14.5" width="11.5" height="12" rx="1" fill="#f7e3c0" stroke="#e6cfa5" stroke-width="1"/><rect x="16.5" y="8.5" width="10" height="18" fill="#fff" stroke="#bdbdbd" stroke-width="1"/><rect x="17.5" y="12" width="8" height="14" fill="#efe3bf"/><line x1="18" y1="10.5" x2="25" y2="10.5" stroke="#c9c9c9"/><line x1="19" y1="12.5" x2="24" y2="12.5" stroke="#c09080" stroke-width="1.2"/><line x1="18.5" y1="15.5" x2="25" y2="15.5" stroke="#c8b46a"/><line x1="18.5" y1="18.5" x2="25" y2="18.5" stroke="#e6c0b0" stroke-width="1.5"/><line x1="18.5" y1="21.5" x2="25" y2="21.5" stroke="#c8b46a"/><line x1="18.5" y1="24.5" x2="25" y2="24.5" stroke="#c8b46a"/><line x1="17" y1="14" x2="17" y2="26" stroke="#d4a0a0"/><line x1="26" y1="14" x2="26" y2="26" stroke="#a8ccb8"/></svg></div>
<div class="t" style="left:368.5px;top:236.95px;font-size:12px;color:#000;font-weight:normal;transform:scaleX(0.9);"><span>UTV</span></div>
<div class="t" style="left:488.6px;top:237.09px;font-size:12.5px;color:#000;font-weight:normal;transform:scaleX(0.95);"><span>0</span></div>
<div class="t" style="left:645px;top:237.09px;font-size:12.5px;color:#000;font-weight:normal;transform:scaleX(0.95);"><span>1</span></div>
<div class="t" style="left:755.6px;top:237.09px;font-size:12.5px;color:#000;font-weight:normal;transform:scaleX(0.95);"><span>0</span></div>
<div style="position:absolute;left:333px;top:265px;height:28px;overflow:hidden"><svg width="36" height="28" viewBox="0 0 36 28"><rect x="0.5" y="0.5" width="6" height="6" rx="0.8" fill="#fff" stroke="#c6c6c6" stroke-width="1.1"/><path transform="translate(0,0)" d="M5 2.5 H2.5 V4.5 H5" fill="none" stroke="#b4b4b4" stroke-width="0.9"/><rect x="8.5" y="0.5" width="6" height="6" rx="0.8" fill="#fff" stroke="#c6c6c6" stroke-width="1.1"/><path transform="translate(8,0)" d="M2 2.5 H5 M3.5 2.5 V4.5 M2 4.5 H5" fill="none" stroke="#b4b4b4" stroke-width="0.9"/><rect x="16.5" y="0.5" width="6" height="6" rx="0.8" fill="#fff" stroke="#c6c6c6" stroke-width="1.1"/><path transform="translate(16,0)" d="M2.5 2 V4.5 H5 M3 3.5 L4 4.5 L5 2.5" fill="none" stroke="#b4b4b4" stroke-width="0.9"/><rect x="0.5" y="8.5" width="6" height="6" rx="0.8" fill="#fff" stroke="#c6c6c6" stroke-width="1.1"/><path transform="translate(0,8)" d="M2.2 2 L3.5 5 L4.8 2" fill="none" stroke="#b4b4b4" stroke-width="0.9"/><rect x="8.5" y="8.5" width="6" height="6" rx="0.8" fill="#fff" stroke="#c6c6c6" stroke-width="1.1"/><path transform="translate(8,8)" d="M2.5 2 V4.8 H4.5 V2" fill="none" stroke="#b4b4b4" stroke-width="0.9"/><rect x="0.5" y="16.5" width="6" height="6" rx="0.8" fill="#fff" stroke="#c6c6c6" stroke-width="1.1"/><path transform="translate(0,16)" d="M2.5 2.5 H4.5 V4.5 H2.5 Z" fill="none" stroke="#b4b4b4" stroke-width="0.9"/><rect x="8.5" y="16.5" width="6" height="6" rx="0.8" fill="#fff" stroke="#c6c6c6" stroke-width="1.1"/><path transform="translate(8,16)" d="M2.2 2.2 L4.8 4.8 M4.8 2.2 L2.2 4.8" fill="none" stroke="#b4b4b4" stroke-width="0.9"/><rect x="22" y="14.5" width="11.5" height="12" rx="1" fill="#f7e3c0" stroke="#e6cfa5" stroke-width="1"/><rect x="16.5" y="8.5" width="10" height="18" fill="#fff" stroke="#bdbdbd" stroke-width="1"/><rect x="17.5" y="12" width="8" height="14" fill="#efe3bf"/><line x1="18" y1="10.5" x2="25" y2="10.5" stroke="#c9c9c9"/><line x1="19" y1="12.5" x2="24" y2="12.5" stroke="#c09080" stroke-width="1.2"/><line x1="18.5" y1="15.5" x2="25" y2="15.5" stroke="#c8b46a"/><line x1="18.5" y1="18.5" x2="25" y2="18.5" stroke="#e6c0b0" stroke-width="1.5"/><line x1="18.5" y1="21.5" x2="25" y2="21.5" stroke="#c8b46a"/><line x1="18.5" y1="24.5" x2="25" y2="24.5" stroke="#c8b46a"/><line x1="17" y1="14" x2="17" y2="26" stroke="#d4a0a0"/><line x1="26" y1="14" x2="26" y2="26" stroke="#a8ccb8"/></svg></div>
<div class="t" style="left:368.5px;top:270.95px;font-size:12px;color:#000;font-weight:normal;transform:scaleX(0.9);"><span>UTS</span></div>
<div class="t" style="left:488.6px;top:271.09px;font-size:12.5px;color:#000;font-weight:normal;transform:scaleX(0.95);"><span>0</span></div>
<div class="t" style="left:645px;top:271.09px;font-size:12.5px;color:#000;font-weight:normal;transform:scaleX(0.95);"><span>1</span></div>
<div class="t" style="left:755.6px;top:271.09px;font-size:12.5px;color:#000;font-weight:normal;transform:scaleX(0.95);"><span>0</span></div>
<div style="position:absolute;left:333px;top:299px;height:28px;overflow:hidden"><svg width="36" height="28" viewBox="0 0 36 28"><rect x="0.5" y="0.5" width="6" height="6" rx="0.8" fill="#fff" stroke="#c6c6c6" stroke-width="1.1"/><path transform="translate(0,0)" d="M5 2.5 H2.5 V4.5 H5" fill="none" stroke="#b4b4b4" stroke-width="0.9"/><rect x="8.5" y="0.5" width="6" height="6" rx="0.8" fill="#fff" stroke="#c6c6c6" stroke-width="1.1"/><path transform="translate(8,0)" d="M2 2.5 H5 M3.5 2.5 V4.5 M2 4.5 H5" fill="none" stroke="#b4b4b4" stroke-width="0.9"/><rect x="16.5" y="0.5" width="6" height="6" rx="0.8" fill="#fff" stroke="#c6c6c6" stroke-width="1.1"/><path transform="translate(16,0)" d="M2.5 2 V4.5 H5 M3 3.5 L4 4.5 L5 2.5" fill="none" stroke="#b4b4b4" stroke-width="0.9"/><rect x="0.5" y="8.5" width="6" height="6" rx="0.8" fill="#fff" stroke="#c6c6c6" stroke-width="1.1"/><path transform="translate(0,8)" d="M2.2 2 L3.5 5 L4.8 2" fill="none" stroke="#b4b4b4" stroke-width="0.9"/><rect x="8.5" y="8.5" width="6" height="6" rx="0.8" fill="#fff" stroke="#c6c6c6" stroke-width="1.1"/><path transform="translate(8,8)" d="M2.5 2 V4.8 H4.5 V2" fill="none" stroke="#b4b4b4" stroke-width="0.9"/><rect x="0.5" y="16.5" width="6" height="6" rx="0.8" fill="#fff" stroke="#c6c6c6" stroke-width="1.1"/><path transform="translate(0,16)" d="M2.5 2.5 H4.5 V4.5 H2.5 Z" fill="none" stroke="#b4b4b4" stroke-width="0.9"/><rect x="8.5" y="16.5" width="6" height="6" rx="0.8" fill="#fff" stroke="#c6c6c6" stroke-width="1.1"/><path transform="translate(8,16)" d="M2.2 2.2 L4.8 4.8 M4.8 2.2 L2.2 4.8" fill="none" stroke="#b4b4b4" stroke-width="0.9"/><rect x="22" y="14.5" width="11.5" height="12" rx="1" fill="#f7e3c0" stroke="#e6cfa5" stroke-width="1"/><rect x="16.5" y="8.5" width="10" height="18" fill="#fff" stroke="#bdbdbd" stroke-width="1"/><rect x="17.5" y="12" width="8" height="14" fill="#efe3bf"/><line x1="18" y1="10.5" x2="25" y2="10.5" stroke="#c9c9c9"/><line x1="19" y1="12.5" x2="24" y2="12.5" stroke="#c09080" stroke-width="1.2"/><line x1="18.5" y1="15.5" x2="25" y2="15.5" stroke="#c8b46a"/><line x1="18.5" y1="18.5" x2="25" y2="18.5" stroke="#e6c0b0" stroke-width="1.5"/><line x1="18.5" y1="21.5" x2="25" y2="21.5" stroke="#c8b46a"/><line x1="18.5" y1="24.5" x2="25" y2="24.5" stroke="#c8b46a"/><line x1="17" y1="14" x2="17" y2="26" stroke="#d4a0a0"/><line x1="26" y1="14" x2="26" y2="26" stroke="#a8ccb8"/></svg></div>
<div class="t" style="left:368.5px;top:304.95px;font-size:12px;color:#000;font-weight:normal;transform:scaleX(0.9);"><span>t40-puutavara</span></div>
<div class="t" style="left:488.6px;top:305.09px;font-size:12.5px;color:#000;font-weight:normal;transform:scaleX(0.95);"><span>0</span></div>
<div class="t" style="left:645px;top:305.09px;font-size:12.5px;color:#000;font-weight:normal;transform:scaleX(0.95);"><span>1</span></div>
<div class="t" style="left:755.6px;top:305.09px;font-size:12.5px;color:#000;font-weight:normal;transform:scaleX(0.95);"><span>0</span></div>
<div style="position:absolute;left:333px;top:333px;height:28px;overflow:hidden"><svg width="36" height="28" viewBox="0 0 36 28"><rect x="0.5" y="0.5" width="6" height="6" rx="0.8" fill="#fff" stroke="#c6c6c6" stroke-width="1.1"/><path transform="translate(0,0)" d="M5 2.5 H2.5 V4.5 H5" fill="none" stroke="#b4b4b4" stroke-width="0.9"/><rect x="8.5" y="0.5" width="6" height="6" rx="0.8" fill="#fff" stroke="#c6c6c6" stroke-width="1.1"/><path transform="translate(8,0)" d="M2 2.5 H5 M3.5 2.5 V4.5 M2 4.5 H5" fill="none" stroke="#b4b4b4" stroke-width="0.9"/><rect x="16.5" y="0.5" width="6" height="6" rx="0.8" fill="#fff" stroke="#c6c6c6" stroke-width="1.1"/><path transform="translate(16,0)" d="M2.5 2 V4.5 H5 M3 3.5 L4 4.5 L5 2.5" fill="none" stroke="#b4b4b4" stroke-width="0.9"/><rect x="0.5" y="8.5" width="6" height="6" rx="0.8" fill="#fff" stroke="#c6c6c6" stroke-width="1.1"/><path transform="translate(0,8)" d="M2.2 2 L3.5 5 L4.8 2" fill="none" stroke="#b4b4b4" stroke-width="0.9"/><rect x="8.5" y="8.5" width="6" height="6" rx="0.8" fill="#fff" stroke="#c6c6c6" stroke-width="1.1"/><path transform="translate(8,8)" d="M2.5 2 V4.8 H4.5 V2" fill="none" stroke="#b4b4b4" stroke-width="0.9"/><rect x="0.5" y="16.5" width="6" height="6" rx="0.8" fill="#fff" stroke="#c6c6c6" stroke-width="1.1"/><path transform="translate(0,16)" d="M2.5 2.5 H4.5 V4.5 H2.5 Z" fill="none" stroke="#b4b4b4" stroke-width="0.9"/><rect x="8.5" y="16.5" width="6" height="6" rx="0.8" fill="#fff" stroke="#c6c6c6" stroke-width="1.1"/><path transform="translate(8,16)" d="M2.2 2.2 L4.8 4.8 M4.8 2.2 L2.2 4.8" fill="none" stroke="#b4b4b4" stroke-width="0.9"/><rect x="22" y="14.5" width="11.5" height="12" rx="1" fill="#f7e3c0" stroke="#e6cfa5" stroke-width="1"/><rect x="16.5" y="8.5" width="10" height="18" fill="#fff" stroke="#bdbdbd" stroke-width="1"/><rect x="17.5" y="12" width="8" height="14" fill="#efe3bf"/><line x1="18" y1="10.5" x2="25" y2="10.5" stroke="#c9c9c9"/><line x1="19" y1="12.5" x2="24" y2="12.5" stroke="#c09080" stroke-width="1.2"/><line x1="18.5" y1="15.5" x2="25" y2="15.5" stroke="#c8b46a"/><line x1="18.5" y1="18.5" x2="25" y2="18.5" stroke="#e6c0b0" stroke-width="1.5"/><line x1="18.5" y1="21.5" x2="25" y2="21.5" stroke="#c8b46a"/><line x1="18.5" y1="24.5" x2="25" y2="24.5" stroke="#c8b46a"/><line x1="17" y1="14" x2="17" y2="26" stroke="#d4a0a0"/><line x1="26" y1="14" x2="26" y2="26" stroke="#a8ccb8"/></svg></div>
<div class="t" style="left:368.5px;top:338.95px;font-size:12px;color:#000;font-weight:normal;transform:scaleX(0.9);"><span>t30-puutavara</span></div>
<div class="t" style="left:488.6px;top:339.09px;font-size:12.5px;color:#000;font-weight:normal;transform:scaleX(0.95);"><span>0</span></div>
<div class="t" style="left:645px;top:339.09px;font-size:12.5px;color:#000;font-weight:normal;transform:scaleX(0.95);"><span>1</span></div>
<div class="t" style="left:755.6px;top:339.09px;font-size:12.5px;color:#000;font-weight:normal;transform:scaleX(0.95);"><span>0</span></div>
<div style="position:absolute;left:333px;top:367px;height:28px;overflow:hidden"><svg width="36" height="28" viewBox="0 0 36 28"><rect x="0.5" y="0.5" width="6" height="6" rx="0.8" fill="#fff" stroke="#c6c6c6" stroke-width="1.1"/><path transform="translate(0,0)" d="M5 2.5 H2.5 V4.5 H5" fill="none" stroke="#b4b4b4" stroke-width="0.9"/><rect x="8.5" y="0.5" width="6" height="6" rx="0.8" fill="#fff" stroke="#c6c6c6" stroke-width="1.1"/><path transform="translate(8,0)" d="M2 2.5 H5 M3.5 2.5 V4.5 M2 4.5 H5" fill="none" stroke="#b4b4b4" stroke-width="0.9"/><rect x="16.5" y="0.5" width="6" height="6" rx="0.8" fill="#fff" stroke="#c6c6c6" stroke-width="1.1"/><path transform="translate(16,0)" d="M2.5 2 V4.5 H5 M3 3.5 L4 4.5 L5 2.5" fill="none" stroke="#b4b4b4" stroke-width="0.9"/><rect x="0.5" y="8.5" width="6" height="6" rx="0.8" fill="#fff" stroke="#c6c6c6" stroke-width="1.1"/><path transform="translate(0,8)" d="M2.2 2 L3.5 5 L4.8 2" fill="none" stroke="#b4b4b4" stroke-width="0.9"/><rect x="8.5" y="8.5" width="6" height="6" rx="0.8" fill="#fff" stroke="#c6c6c6" stroke-width="1.1"/><path transform="translate(8,8)" d="M2.5 2 V4.8 H4.5 V2" fill="none" stroke="#b4b4b4" stroke-width="0.9"/><rect x="0.5" y="16.5" width="6" height="6" rx="0.8" fill="#fff" stroke="#c6c6c6" stroke-width="1.1"/><path transform="translate(0,16)" d="M2.5 2.5 H4.5 V4.5 H2.5 Z" fill="none" stroke="#b4b4b4" stroke-width="0.9"/><rect x="8.5" y="16.5" width="6" height="6" rx="0.8" fill="#fff" stroke="#c6c6c6" stroke-width="1.1"/><path transform="translate(8,16)" d="M2.2 2.2 L4.8 4.8 M4.8 2.2 L2.2 4.8" fill="none" stroke="#b4b4b4" stroke-width="0.9"/><rect x="22" y="14.5" width="11.5" height="12" rx="1" fill="#f7e3c0" stroke="#e6cfa5" stroke-width="1"/><rect x="16.5" y="8.5" width="10" height="18" fill="#fff" stroke="#bdbdbd" stroke-width="1"/><rect x="17.5" y="12" width="8" height="14" fill="#efe3bf"/><line x1="18" y1="10.5" x2="25" y2="10.5" stroke="#c9c9c9"/><line x1="19" y1="12.5" x2="24" y2="12.5" stroke="#c09080" stroke-width="1.2"/><line x1="18.5" y1="15.5" x2="25" y2="15.5" stroke="#c8b46a"/><line x1="18.5" y1="18.5" x2="25" y2="18.5" stroke="#e6c0b0" stroke-width="1.5"/><line x1="18.5" y1="21.5" x2="25" y2="21.5" stroke="#c8b46a"/><line x1="18.5" y1="24.5" x2="25" y2="24.5" stroke="#c8b46a"/><line x1="17" y1="14" x2="17" y2="26" stroke="#d4a0a0"/><line x1="26" y1="14" x2="26" y2="26" stroke="#a8ccb8"/></svg></div>
<div class="t" style="left:368.5px;top:372.95px;font-size:12px;color:#000;font-weight:normal;transform:scaleX(0.9);"><span>t24-puutavara</span></div>
<div class="t" style="left:488.6px;top:373.09px;font-size:12.5px;color:#000;font-weight:normal;transform:scaleX(0.95);"><span>0</span></div>
<div class="t" style="left:645px;top:373.09px;font-size:12.5px;color:#000;font-weight:normal;transform:scaleX(0.95);"><span>1</span></div>
<div class="t" style="left:755.6px;top:373.09px;font-size:12.5px;color:#000;font-weight:normal;transform:scaleX(0.95);"><span>0</span></div>
<div style="position:absolute;left:333px;top:401px;height:28px;overflow:hidden"><svg width="36" height="28" viewBox="0 0 36 28"><rect x="0.5" y="0.5" width="6" height="6" rx="0.8" fill="#fff" stroke="#c6c6c6" stroke-width="1.1"/><path transform="translate(0,0)" d="M5 2.5 H2.5 V4.5 H5" fill="none" stroke="#b4b4b4" stroke-width="0.9"/><rect x="8.5" y="0.5" width="6" height="6" rx="0.8" fill="#fff" stroke="#c6c6c6" stroke-width="1.1"/><path transform="translate(8,0)" d="M2 2.5 H5 M3.5 2.5 V4.5 M2 4.5 H5" fill="none" stroke="#b4b4b4" stroke-width="0.9"/><rect x="16.5" y="0.5" width="6" height="6" rx="0.8" fill="#fff" stroke="#c6c6c6" stroke-width="1.1"/><path transform="translate(16,0)" d="M2.5 2 V4.5 H5 M3 3.5 L4 4.5 L5 2.5" fill="none" stroke="#b4b4b4" stroke-width="0.9"/><rect x="0.5" y="8.5" width="6" height="6" rx="0.8" fill="#fff" stroke="#c6c6c6" stroke-width="1.1"/><path transform="translate(0,8)" d="M2.2 2 L3.5 5 L4.8 2" fill="none" stroke="#b4b4b4" stroke-width="0.9"/><rect x="8.5" y="8.5" width="6" height="6" rx="0.8" fill="#fff" stroke="#c6c6c6" stroke-width="1.1"/><path transform="translate(8,8)" d="M2.5 2 V4.8 H4.5 V2" fill="none" stroke="#b4b4b4" stroke-width="0.9"/><rect x="0.5" y="16.5" width="6" height="6" rx="0.8" fill="#fff" stroke="#c6c6c6" stroke-width="1.1"/><path transform="translate(0,16)" d="M2.5 2.5 H4.5 V4.5 H2.5 Z" fill="none" stroke="#b4b4b4" stroke-width="0.9"/><rect x="8.5" y="16.5" width="6" height="6" rx="0.8" fill="#fff" stroke="#c6c6c6" stroke-width="1.1"/><path transform="translate(8,16)" d="M2.2 2.2 L4.8 4.8 M4.8 2.2 L2.2 4.8" fill="none" stroke="#b4b4b4" stroke-width="0.9"/><rect x="22" y="14.5" width="11.5" height="12" rx="1" fill="#f7e3c0" stroke="#e6cfa5" stroke-width="1"/><rect x="16.5" y="8.5" width="10" height="18" fill="#fff" stroke="#bdbdbd" stroke-width="1"/><rect x="17.5" y="12" width="8" height="14" fill="#efe3bf"/><line x1="18" y1="10.5" x2="25" y2="10.5" stroke="#c9c9c9"/><line x1="19" y1="12.5" x2="24" y2="12.5" stroke="#c09080" stroke-width="1.2"/><line x1="18.5" y1="15.5" x2="25" y2="15.5" stroke="#c8b46a"/><line x1="18.5" y1="18.5" x2="25" y2="18.5" stroke="#e6c0b0" stroke-width="1.5"/><line x1="18.5" y1="21.5" x2="25" y2="21.5" stroke="#c8b46a"/><line x1="18.5" y1="24.5" x2="25" y2="24.5" stroke="#c8b46a"/><line x1="17" y1="14" x2="17" y2="26" stroke="#d4a0a0"/><line x1="26" y1="14" x2="26" y2="26" stroke="#a8ccb8"/></svg></div>
<div class="t" style="left:368.5px;top:406.95px;font-size:12px;color:#000;font-weight:normal;transform:scaleX(0.9);"><span>puutavara</span></div>
<div class="t" style="left:488.6px;top:407.09px;font-size:12.5px;color:#000;font-weight:normal;transform:scaleX(0.95);"><span>0</span></div>
<div class="t" style="left:645px;top:407.09px;font-size:12.5px;color:#000;font-weight:normal;transform:scaleX(0.95);"><span>1</span></div>
<div class="t" style="left:755.6px;top:407.09px;font-size:12.5px;color:#000;font-weight:normal;transform:scaleX(0.95);"><span>0</span></div>
<div style="position:absolute;left:333px;top:435px;height:28px;overflow:hidden"><svg width="36" height="28" viewBox="0 0 36 28"><rect x="0.5" y="0.5" width="6" height="6" rx="0.8" fill="#fff" stroke="#c6c6c6" stroke-width="1.1"/><path transform="translate(0,0)" d="M5 2.5 H2.5 V4.5 H5" fill="none" stroke="#b4b4b4" stroke-width="0.9"/><rect x="8.5" y="0.5" width="6" height="6" rx="0.8" fill="#fff" stroke="#c6c6c6" stroke-width="1.1"/><path transform="translate(8,0)" d="M2 2.5 H5 M3.5 2.5 V4.5 M2 4.5 H5" fill="none" stroke="#b4b4b4" stroke-width="0.9"/><rect x="16.5" y="0.5" width="6" height="6" rx="0.8" fill="#fff" stroke="#c6c6c6" stroke-width="1.1"/><path transform="translate(16,0)" d="M2.5 2 V4.5 H5 M3 3.5 L4 4.5 L5 2.5" fill="none" stroke="#b4b4b4" stroke-width="0.9"/><rect x="0.5" y="8.5" width="6" height="6" rx="0.8" fill="#fff" stroke="#c6c6c6" stroke-width="1.1"/><path transform="translate(0,8)" d="M2.2 2 L3.5 5 L4.8 2" fill="none" stroke="#b4b4b4" stroke-width="0.9"/><rect x="8.5" y="8.5" width="6" height="6" rx="0.8" fill="#fff" stroke="#c6c6c6" stroke-width="1.1"/><path transform="translate(8,8)" d="M2.5 2 V4.8 H4.5 V2" fill="none" stroke="#b4b4b4" stroke-width="0.9"/><rect x="0.5" y="16.5" width="6" height="6" rx="0.8" fill="#fff" stroke="#c6c6c6" stroke-width="1.1"/><path transform="translate(0,16)" d="M2.5 2.5 H4.5 V4.5 H2.5 Z" fill="none" stroke="#b4b4b4" stroke-width="0.9"/><rect x="8.5" y="16.5" width="6" height="6" rx="0.8" fill="#fff" stroke="#c6c6c6" stroke-width="1.1"/><path transform="translate(8,16)" d="M2.2 2.2 L4.8 4.8 M4.8 2.2 L2.2 4.8" fill="none" stroke="#b4b4b4" stroke-width="0.9"/><rect x="22" y="14.5" width="11.5" height="12" rx="1" fill="#f7e3c0" stroke="#e6cfa5" stroke-width="1"/><rect x="16.5" y="8.5" width="10" height="18" fill="#fff" stroke="#bdbdbd" stroke-width="1"/><rect x="17.5" y="12" width="8" height="14" fill="#efe3bf"/><line x1="18" y1="10.5" x2="25" y2="10.5" stroke="#c9c9c9"/><line x1="19" y1="12.5" x2="24" y2="12.5" stroke="#c09080" stroke-width="1.2"/><line x1="18.5" y1="15.5" x2="25" y2="15.5" stroke="#c8b46a"/><line x1="18.5" y1="18.5" x2="25" y2="18.5" stroke="#e6c0b0" stroke-width="1.5"/><line x1="18.5" y1="21.5" x2="25" y2="21.5" stroke="#c8b46a"/><line x1="18.5" y1="24.5" x2="25" y2="24.5" stroke="#c8b46a"/><line x1="17" y1="14" x2="17" y2="26" stroke="#d4a0a0"/><line x1="26" y1="14" x2="26" y2="26" stroke="#a8ccb8"/></svg></div>
<div class="t" style="left:368.5px;top:440.95px;font-size:12px;color:#000;font-weight:normal;transform:scaleX(0.9);"><span>pk-puutavara</span></div>
<div class="t" style="left:488.6px;top:441.09px;font-size:12.5px;color:#000;font-weight:normal;transform:scaleX(0.95);"><span>0</span></div>
<div class="t" style="left:645px;top:441.09px;font-size:12.5px;color:#000;font-weight:normal;transform:scaleX(0.95);"><span>1</span></div>
<div class="t" style="left:755.6px;top:441.09px;font-size:12.5px;color:#000;font-weight:normal;transform:scaleX(0.95);"><span>0</span></div>
<div style="position:absolute;left:333px;top:469px;height:1px;overflow:hidden"><svg width="36" height="28" viewBox="0 0 36 28"><rect x="0.5" y="0.5" width="6" height="6" rx="0.8" fill="#fff" stroke="#c6c6c6" stroke-width="1.1"/><path transform="translate(0,0)" d="M5 2.5 H2.5 V4.5 H5" fill="none" stroke="#b4b4b4" stroke-width="0.9"/><rect x="8.5" y="0.5" width="6" height="6" rx="0.8" fill="#fff" stroke="#c6c6c6" stroke-width="1.1"/><path transform="translate(8,0)" d="M2 2.5 H5 M3.5 2.5 V4.5 M2 4.5 H5" fill="none" stroke="#b4b4b4" stroke-width="0.9"/><rect x="16.5" y="0.5" width="6" height="6" rx="0.8" fill="#fff" stroke="#c6c6c6" stroke-width="1.1"/><path transform="translate(16,0)" d="M2.5 2 V4.5 H5 M3 3.5 L4 4.5 L5 2.5" fill="none" stroke="#b4b4b4" stroke-width="0.9"/><rect x="0.5" y="8.5" width="6" height="6" rx="0.8" fill="#fff" stroke="#c6c6c6" stroke-width="1.1"/><path transform="translate(0,8)" d="M2.2 2 L3.5 5 L4.8 2" fill="none" stroke="#b4b4b4" stroke-width="0.9"/><rect x="8.5" y="8.5" width="6" height="6" rx="0.8" fill="#fff" stroke="#c6c6c6" stroke-width="1.1"/><path transform="translate(8,8)" d="M2.5 2 V4.8 H4.5 V2" fill="none" stroke="#b4b4b4" stroke-width="0.9"/><rect x="0.5" y="16.5" width="6" height="6" rx="0.8" fill="#fff" stroke="#c6c6c6" stroke-width="1.1"/><path transform="translate(0,16)" d="M2.5 2.5 H4.5 V4.5 H2.5 Z" fill="none" stroke="#b4b4b4" stroke-width="0.9"/><rect x="8.5" y="16.5" width="6" height="6" rx="0.8" fill="#fff" stroke="#c6c6c6" stroke-width="1.1"/><path transform="translate(8,16)" d="M2.2 2.2 L4.8 4.8 M4.8 2.2 L2.2 4.8" fill="none" stroke="#b4b4b4" stroke-width="0.9"/><rect x="22" y="14.5" width="11.5" height="12" rx="1" fill="#f7e3c0" stroke="#e6cfa5" stroke-width="1"/><rect x="16.5" y="8.5" width="10" height="18" fill="#fff" stroke="#bdbdbd" stroke-width="1"/><rect x="17.5" y="12" width="8" height="14" fill="#efe3bf"/><line x1="18" y1="10.5" x2="25" y2="10.5" stroke="#c9c9c9"/><line x1="19" y1="12.5" x2="24" y2="12.5" stroke="#c09080" stroke-width="1.2"/><line x1="18.5" y1="15.5" x2="25" y2="15.5" stroke="#c8b46a"/><line x1="18.5" y1="18.5" x2="25" y2="18.5" stroke="#e6c0b0" stroke-width="1.5"/><line x1="18.5" y1="21.5" x2="25" y2="21.5" stroke="#c8b46a"/><line x1="18.5" y1="24.5" x2="25" y2="24.5" stroke="#c8b46a"/><line x1="17" y1="14" x2="17" y2="26" stroke="#d4a0a0"/><line x1="26" y1="14" x2="26" y2="26" stroke="#a8ccb8"/></svg></div>
<div style="position:absolute;left:985px;top:42px;width:16px;height:428px;background:#f0f0f0;"></div>
<div style="position:absolute;left:985px;top:59px;width:15px;height:72px;background:#cdcdcd;"></div>
<svg style="position:absolute;left:988px;top:47px" width="9" height="8" viewBox="0 0 9 8"><path d="M1 6 L4.5 2.3 L8 6" fill="none" stroke="#505050" stroke-width="1.8"/></svg>
<svg style="position:absolute;left:988px;top:458px" width="9" height="8" viewBox="0 0 9 8"><path d="M1 1.8 L4.5 5.9 L8 1.8" fill="none" stroke="#505050" stroke-width="1.8"/></svg>
<div style="position:absolute;left:966px;top:206px;width:150px;height:112px;background:rgba(0,0,0,0.28);filter:blur(1px);"></div>
<div style="position:absolute;left:964px;top:204px;width:148px;height:110px;border:1px solid #a0a0a0;background:#f0f0f0;"></div>
<svg style="position:absolute;left:969px;top:209px" width="16" height="16" viewBox="0 0 16 16"><line x1="7" y1="9" x2="2.5" y2="13.5" stroke="#1d4f9c" stroke-width="2.2" stroke-linecap="round"/><circle cx="10" cy="6" r="3.6" fill="#c9d2dd" stroke="#3088de" stroke-width="1.7"/></svg>
<div class="t" style="left:991px;top:209.75px;font-size:12px;color:#000;font-weight:normal;transform:scaleX(0.94);"><span>Etsi (Ctrl+F)</span></div>
<div style="position:absolute;left:968px;top:230px;width:142px;height:1px;background:#bdbdbd;"></div>
<div style="position:absolute;left:968px;top:231px;width:142px;height:1px;background:#fff;"></div>
<svg style="position:absolute;left:968px;top:236px" width="20" height="18" viewBox="0 0 20 18"><defs><pattern id="chk" width="2" height="2" patternUnits="userSpaceOnUse"><rect width="1" height="1" fill="#000"/><rect x="1" y="1" width="1" height="1" fill="#000"/></pattern></defs><path d="M5 6.6 H2.6 V16.4 H12.4 V8.5" fill="#fff" stroke="#000" stroke-width="1.2"/><rect x="3.2" y="7.2" width="8.6" height="8.6" fill="#fff"/><path d="M4 12.5 H5.6 M7 12.5 H11 M4 14.6 H5.6 M7 14.6 H11" stroke="#000" stroke-width="1.1"/><path d="M4.5 7.5 L8.5 3.2 L12.5 7.6 L9.5 10.8 Z" fill="url(#chk)"/><path d="M8.2 3.3 H13.6 L14.8 4.6 L13.8 6.4 L12 7.2" fill="#fff" stroke="#000" stroke-width="1.1"/><rect x="15.3" y="3.2" width="1.6" height="6.2" fill="#2f72d0"/></svg>
<div class="t" style="left:991px;top:238.45px;font-size:12px;color:#000;font-weight:normal;transform:scaleX(0.97);"><span>Näkymä</span></div>
<svg style="position:absolute;left:1100px;top:241px" width="5" height="8" viewBox="0 0 5 8"><path d="M0 0 L4.5 4 L0 8 Z" fill="#000"/></svg>
<div style="position:absolute;left:968px;top:260px;width:142px;height:1px;background:#fff;"></div>
<div style="position:absolute;left:987px;top:267px;width:123px;height:15px;background:#c5dff6;"></div>
<div class="t" style="left:991px;top:267.95px;font-size:12px;color:#000;font-weight:normal;transform:scaleX(0.97);"><span>Deaktivoi</span></div>
<div style="position:absolute;left:968px;top:288px;width:142px;height:1px;background:#bdbdbd;"></div>
<div style="position:absolute;left:968px;top:289px;width:142px;height:1px;background:#fff;"></div>
<div class="t" style="left:991px;top:296.75px;font-size:12px;color:#000;font-weight:normal;transform:scaleX(0.935);"><span>Katsele kirjastoa</span></div>
<div style="position:absolute;left:962px;top:257px;width:145px;height:25px;border:3px solid #f7801f;"></div>
</body></html>
